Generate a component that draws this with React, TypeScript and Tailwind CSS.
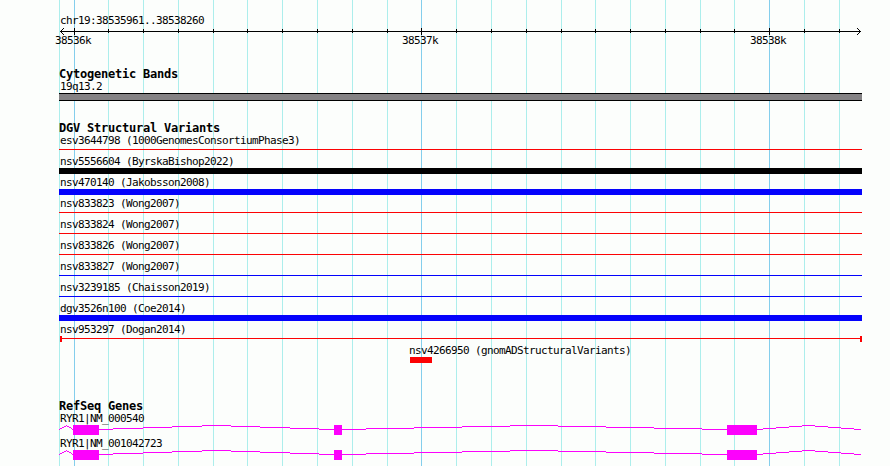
import type { ReactNode } from "react";

interface Variant {
  name: string;
  study: string;
  glyph: string;
  inset?: string;
}

interface Step {
  x: number;
  w: number;
  y: number;
}

const MINOR = [
  59, 108, 143, 178, 213, 247, 282, 317, 352, 387, 456, 491, 526, 561, 595, 630,
  665, 700, 734, 804, 839,
];

const MAJOR = [
  { x: 74, label: "38536k", labelX: 55 },
  { x: 421, label: "38537k", labelX: 402 },
  { x: 769, label: "38538k", labelX: 750 },
];

const THIN_RED = "mt-[2px] h-px w-[803px] bg-[#fc0204]";
const THIN_BLUE = "mt-[2px] h-px w-[803px] bg-[#0402fc]";
const THICK_BLUE = "h-[6px] w-[803px] bg-[#0402fc]";

const variants: Variant[] = [
  { name: "esv3644798", study: "1000GenomesConsortiumPhase3", glyph: THIN_RED },
  { name: "nsv5556604", study: "ByrskaBishop2022", glyph: "h-[6px] w-[803px] bg-black" },
  { name: "nsv470140", study: "Jakobsson2008", glyph: THICK_BLUE },
  { name: "nsv833823", study: "Wong2007", glyph: THIN_RED },
  { name: "nsv833824", study: "Wong2007", glyph: THIN_RED },
  { name: "nsv833826", study: "Wong2007", glyph: THIN_RED },
  { name: "nsv833827", study: "Wong2007", glyph: THIN_BLUE },
  { name: "nsv3239185", study: "Chaisson2019", glyph: THIN_BLUE },
  { name: "dgv3526n100", study: "Coe2014", glyph: THICK_BLUE },
  {
    name: "nsv953297",
    study: "Dogan2014",
    // capped line, both ends lie inside the region
    glyph: "ml-px h-[6px] w-[802px] border-x-2 border-[#fc0204] bg-[linear-gradient(#fc0204,#fc0204)] bg-[length:100%_1px] bg-[position:0_2px] bg-no-repeat",
  },
  {
    name: "nsv4266950",
    study: "gnomADStructuralVariants",
    glyph: "ml-[2px] h-[6px] w-[22px] bg-[#fc0204]",
    inset: "pl-[349px]",
  },
];

const exons = [
  { x: 73, w: 26 },
  { x: 334, w: 8 },
  { x: 727, w: 30 },
];

// Each intron climbs four pixels to its middle and back down
const intron = (stops: number[]): Step[] =>
  stops.slice(0, -1).map((x, i) => ({ x, w: stops[i + 1] - x, y: Math.abs(4 - i) }));

const introns: Step[] = [
  ...intron([59, 60, 62, 64, 66, 67, 69, 71, 72, 73]),
  ...intron([99, 113, 143, 172, 202, 231, 260, 290, 319, 334]),
  ...intron([342, 366, 414, 462, 510, 558, 606, 654, 702, 727]),
  ...intron([757, 763, 776, 789, 802, 815, 828, 841, 854, 861]),
];

const Gridlines = () => (
  <svg className="absolute inset-0" width="890" height="466" shapeRendering="crispEdges">
    {MINOR.map((x) => (
      <rect key={x} x={x} y="0" width="1" height="466" fill="#aceeec" />
    ))}
    {MAJOR.map(({ x }) => (
      <rect key={x} x={x} y="0" width="1" height="466" fill="#84ceec" />
    ))}
  </svg>
);

const Ruler = () => (
  <svg className="block" width="890" height="40" viewBox="0 27 890 40">
    <g shapeRendering="crispEdges">
      <rect x="60" y="31" width="801" height="1" />
      {MINOR.slice(1).map((x) => (
        <rect key={x} x={x} y="29" width="1" height="4" />
      ))}
      {MAJOR.map(({ x }) => (
        <rect key={x} x={x} y="28" width="1" height="7" />
      ))}
      {[1, 2, 3].map((d) => (
        <g key={d}>
          <rect x={60 + d} y={31 - d} width="1" height="1" />
          <rect x={60 + d} y={31 + d} width="1" height="1" />
          <rect x={860 - d} y={31 - d} width="1" height="1" />
          <rect x={860 - d} y={31 + d} width="1" height="1" />
        </g>
      ))}
    </g>
    {MAJOR.map(({ label, labelX }) => (
      <text key={label} x={labelX} y="44" className="text-[11px] tracking-[-0.622px]">
        {label}
      </text>
    ))}
  </svg>
);

const Label = ({ children }: { children: ReactNode }) => (
  <div className="h-[13px] pl-px text-[11px] leading-[13px] tracking-[-0.622px] whitespace-pre">
    {children}
  </div>
);

const TrackTitle = ({ children }: { children: ReactNode }) => (
  <h2 className="h-[13px] text-[12px] leading-[15px] font-bold tracking-[-0.224px] whitespace-pre">
    {children}
  </h2>
);

const VariantRow = ({ name, study, glyph, inset = "" }: Variant) => (
  <div className={`h-[21px] ${inset}`}>
    <Label>
      {name} ({study})
    </Label>
    <div className="flow-root">
      <div className={glyph} />
    </div>
  </div>
);

const GeneRow = ({ name }: { name: string }) => (
  <div className="h-[25px]">
    <Label>{name}</Label>
    <svg
      className="block"
      width="803"
      height="10"
      viewBox="59 0 803 10"
      fill="#fc02fc"
      shapeRendering="crispEdges"
    >
      {introns.map(({ x, w, y }) => (
        <rect key={x} x={x} y={y} width={w} height="1" />
      ))}
      {exons.map(({ x, w }) => (
        <rect key={`exon-${x}`} x={x} y="0" width={w} height="10" />
      ))}
    </svg>
  </div>
);

export default function App() {
  return (
    <div className="relative h-[466px] w-[890px] overflow-hidden bg-[#fcfefc] font-['DejaVu_Sans_Mono',monospace] text-black">
      <Gridlines />
      <main className="relative pt-[14px]">
        <div className="pl-[59px]">
          <Label>chr19:38535961..38538260</Label>
        </div>
        <Ruler />
        <div className="flex flex-col pl-[59px]">
          <section className="h-[54px]">
            <TrackTitle>Cytogenetic Bands</TrackTitle>
            <Label>19q13.2</Label>
            <div className="h-[8px] w-[803px] border-y border-black bg-[#848284]" />
          </section>
          <section className="h-[278px]">
            <TrackTitle>DGV Structural Variants</TrackTitle>
            {variants.map((variant) => (
              <VariantRow key={variant.name} {...variant} />
            ))}
          </section>
          <section>
            <TrackTitle>RefSeq Genes</TrackTitle>
            <GeneRow name="RYR1|NM_000540" />
            <GeneRow name="RYR1|NM_001042723" />
          </section>
        </div>
      </main>
    </div>
  );
}
